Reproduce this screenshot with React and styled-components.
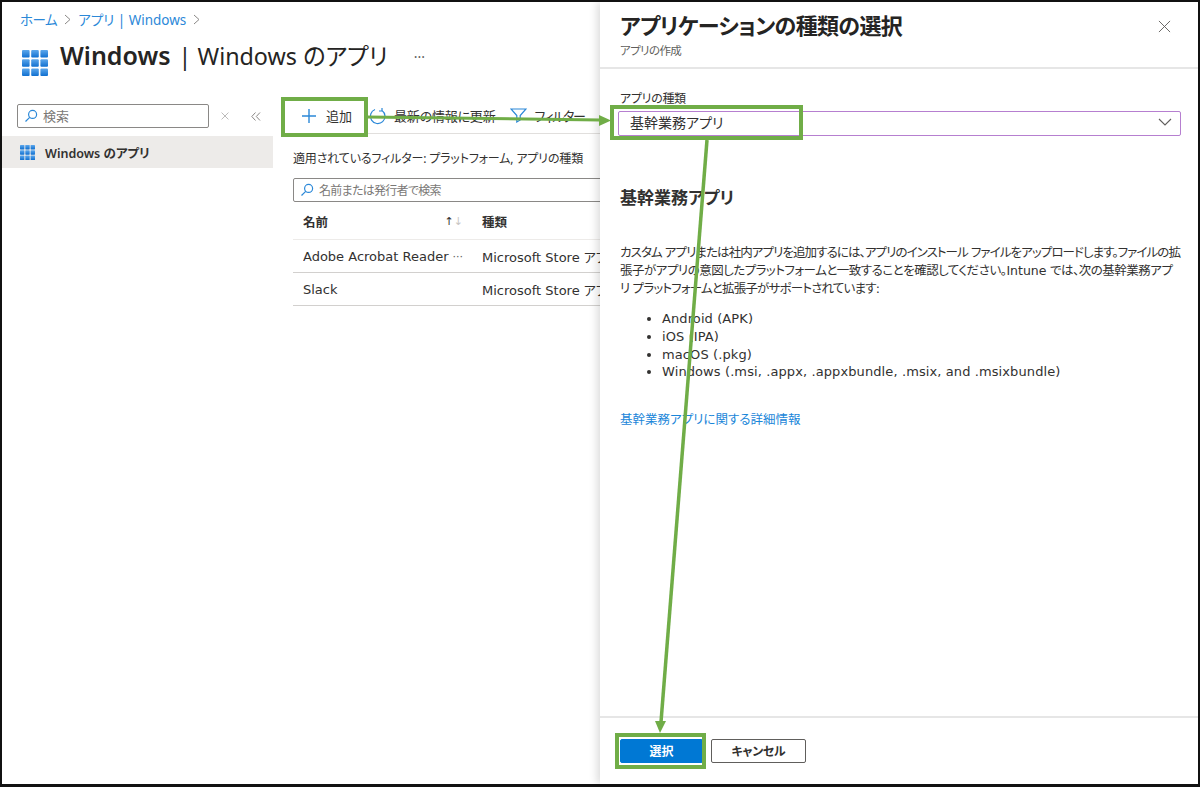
import React from "react";
import styled, { createGlobalStyle } from "styled-components";

const LATIN = `"DejaVu Sans", "Noto Sans CJK JP", sans-serif`;
const Global = createGlobalStyle`
  html, body { margin: 0; padding: 0; background: #fff; }
  * { box-sizing: border-box; }
  body { font-family: "Noto Sans", "Noto Sans CJK JP", sans-serif; font-feature-settings: "palt"; color: #323130; }
`;
const Frame = styled.div`
  position: relative; width: 1200px; height: 787px; border: 2px solid #111; border-bottom-width: 3px;
  display: flex; overflow: hidden; background: #fff;
`;
const Left = styled.div`width: 598px; flex: none; display: flex; flex-direction: column; overflow: hidden;`;
const Header = styled.header`padding: 7px 0 0 18px; height: 96px;`;
const Crumbs = styled.nav`display: flex; align-items: center; gap: 7px; font-size: 13.5px; height: 20px; color: #2b88d8; white-space: nowrap;`;
const Home = styled.span`letter-spacing: -.5px;`;
const ChevronMark = styled.svg`flex: none;`;
const TitleRow = styled.div`display: flex; align-items: flex-start; margin-top: 6px; white-space: nowrap;`;
const LogoWrap = styled.span`margin: 15px 12px 0 2px; display: flex;`;
const Title = styled.h1`margin: 0; font-size: 23.3px; font-weight: 400; line-height: 40px; color: #252423; b { font-weight: 600; font-size: 25px; margin-right: 2px; }`;
const More = styled.span`margin: -2px 0 0 26px; font-size: 14px; line-height: 40px; color: #605e5c;`;
const Body = styled.div`display: flex; flex: 1; min-height: 0;`;
const Side = styled.aside`width: 271px; flex: none;`;
const SideTop = styled.div`display: flex; align-items: center; padding-left: 15px; height: 36px;`;
const SearchBox = styled.div`
  display: flex; align-items: center; gap: 5px; height: 24px; width: ${p => p.$w}px;
  border: 1px solid #8a8886; border-radius: 2px; padding: 0 0 1px 6px; font-size: ${p => p.$fs}px; letter-spacing: ${p => p.$ls}px;
  color: #7a7876; white-space: nowrap; flex: none;
`;
const SideBtn = styled.span`display: flex; width: 31px; justify-content: center; color: #8a8886;`;
const NavItem = styled.div`
  display: flex; align-items: center; gap: 10px; height: 32px; margin-top: 2px; padding-left: 18px;
  background: #edebe9; font-size: 12.5px; font-weight: 600; color: #323130;
`;
const Main = styled.main`flex: 1; min-width: 0; padding-left: 20px; white-space: nowrap;`;
const Toolbar = styled.div`
  display: flex; align-items: center; height: 36px; margin-left: -10px; border-bottom: 1px solid #e1dfdd;
  font-size: 13px; color: #323130; padding-left: 18px;
`;
const ToolItem = styled.span`display: flex; align-items: center; gap: ${p => p.$gap}px; margin-right: ${p => p.$mr || 0}px; letter-spacing: ${p => p.$ls || 0}px;`;
const FilterInfo = styled.p`margin: 16px 0 10px; font-size: 12px; line-height: 18px; color: #323130; letter-spacing: -.15px;`;
const Table = styled.div`width: 320px;`;
const Row = styled.div`
  display: grid; grid-template-columns: 179px 1fr; height: ${p => p.$h}px; align-items: center; padding: ${p => p.$head ? 2 : 0}px 0 0 10px;
  border-bottom: 1px solid ${p => p.$head ? "#edebe9" : "#d2d0ce"}; font-family: ${LATIN}; font-size: ${p => p.$head ? 12.5 : 13}px; font-weight: ${p => p.$head ? 700 : 400}; overflow: hidden;
`;
const NameCell = styled.span`display: flex; justify-content: space-between; align-items: center; padding-right: 19px; overflow: hidden;`;
const Sort = styled.span`font-size: 11px; font-weight: 400; color: #323130; i { font-style: normal; color: #c8c6c4; }`;
const Ell = styled.span`color: #605e5c; font-size: 11px;`;

const Panel = styled.section`
  flex: 1; min-width: 0; display: flex; flex-direction: column; box-shadow: -3px 0 8px rgba(0,0,0,.14); position: relative; background: #fff;
`;
const PanelHead = styled.div`display: flex; justify-content: space-between; padding: 6px 27px 0 20px; height: 67px; border-bottom: 2px solid #e6e6e6;`;
const PanelTitle = styled.h2`margin: 0; font-size: 22px; font-weight: 600; line-height: 34px; color: #252423; letter-spacing: -.65px;`;
const PanelSub = styled.div`font-size: 11.5px; line-height: 17px; color: #605e5c; letter-spacing: -.6px;`;
const CloseBtn = styled.span`display: flex; margin-top: 12px; color: #605e5c;`;
const PanelBody = styled.div`flex: 1; padding: 20px 17px 0 18px; min-height: 0;`;
const FieldLabel = styled.label`display: block; font-size: 12px; line-height: 20px; margin-bottom: 2px; padding-left: 2px; color: #323130; letter-spacing: -.3px;`;
const Select = styled.div`
  display: flex; align-items: center; justify-content: space-between; height: 25px; border: 1px solid #b67fd0; border-radius: 2px;
  padding: 0 8px 3px 11px; font-size: 14px; color: #323130;
`;
const Section = styled.div`padding-left: 2px;`;
const H3 = styled.h3`margin: 49px 0 0; font-size: 17px; font-weight: 600; line-height: 26px; color: #323130;`;
const Para = styled.p`margin: 33px 0 0; font-family: ${LATIN}; font-size: 12.5px; line-height: 18px; white-space: nowrap; color: #323130; letter-spacing: -.92px;`;
const ParaLine = styled.span`letter-spacing: ${p => p.$ls}px;`;
const Latin = styled.span`letter-spacing: 0;`;
const List = styled.ul`margin: 12px 0 0; padding-left: 42px; font-family: ${LATIN}; font-size: 13px; letter-spacing: .1px; line-height: 17.800px; color: #323130; white-space: nowrap;`;
const Link = styled.a`display: block; margin-top: 30px; font-size: 12.5px; line-height: 18px; color: #1a86d9;`;
const Footer = styled.div`display: flex; gap: 8px; height: 68px; padding: 21px 0 0 20px; border-top: 2px solid #e6e6e6;`;
const Btn = styled.button`
  height: 24px; width: ${p => p.$w}px; font: 600 12px "Noto Sans", "Noto Sans CJK JP", sans-serif; font-feature-settings: "palt"; letter-spacing: ${p => p.$ls || 0}px; border-radius: 2px; padding: 0;
  border: 1px solid ${p => p.$primary ? "#0078d4" : "#605e5c"}; background: ${p => p.$primary ? "#0078d4" : "#fff"}; color: ${p => p.$primary ? "#fff" : "#323130"};
`;
const Callout = styled.div`
  position: absolute; left: ${p => p.$x - 2}px; top: ${p => p.$y - 2}px; width: ${p => p.$w}px; height: ${p => p.$h}px;
  border: 4px solid #70ad47; pointer-events: none;
`;
const Arrows = styled.svg`position: absolute; left: -2px; top: -2px; pointer-events: none;`;

const Grid = ({ size = 26 }) => (
  <svg width={size} height={size} viewBox="0 0 26 26">
    <defs><linearGradient id="g" x1="0" y1="0" x2="0" y2="1"><stop offset="0" stopColor="#5ea8ec" /><stop offset="1" stopColor="#0f6fd0" /></linearGradient></defs>
    {[0, 9.2, 18.4].flatMap(y => [0, 9.2, 18.4].map(x => <rect key={x + "-" + y} x={x} y={y} width="7.6" height="7.6" rx="1" fill="url(#g)" />))}
  </svg>
);
const Lens = () => (
  <svg width="14" height="14" viewBox="0 0 14 14" fill="none" stroke="#2b88d8" strokeWidth="1.2"><circle cx="8.6" cy="5.4" r="4" /><path d="M5.7 8.3 1.5 12.5" /></svg>
);
const Cross = ({ s = 14, c = "currentColor", w = 1 }) => (
  <svg width={s} height={s} viewBox="0 0 14 14" fill="none" stroke={c} strokeWidth={w}><path d="M1 1l12 12M13 1 1 13" /></svg>
);
const Chevron = () => (
  <ChevronMark width="7" height="11" viewBox="0 0 7 11" fill="none" stroke="#8a8886"><path d="M1 1l5 4.500-5 4.500" /></ChevronMark>
);

export default function App() {
  return (
    <Frame>
      <Global />
      <Left>
        <Header>
          <Crumbs><Home>ホーム</Home><Chevron /><span>アプリ | Windows</span><Chevron /></Crumbs>
          <TitleRow>
            <LogoWrap><Grid /></LogoWrap>
            <Title><b>Windows</b> | Windows のアプリ</Title>
            <More>...</More>
          </TitleRow>
        </Header>
        <Body>
          <Side>
            <SideTop>
              <SearchBox $w={192} $fs={13} $ls={0}><Lens />検索</SearchBox>
              <SideBtn><Cross s={8} c="#8a8886" /></SideBtn>
              <SideBtn>
                <svg width="10" height="9" viewBox="0 0 10 9" fill="none" stroke="#8a8886"><path d="M4.5.5.8 4.5l3.7 4M9 .5 5.3 4.5 9 8.500" /></svg>
              </SideBtn>
            </SideTop>
            <NavItem><Grid size={15} />Windows のアプリ</NavItem>
          </Side>
          <Main>
            <Toolbar>
              <ToolItem $gap={9} $mr={17}>
                <svg width="16" height="16" viewBox="0 0 16 16" stroke="#2b88d8" strokeWidth="1.4"><path d="M8 1v14M1 8h14" /></svg>追加
              </ToolItem>
              <ToolItem $gap={7} $mr={15} $ls={-.2}>
                <svg width="18" height="18" viewBox="0 0 18 18" fill="none" stroke="#2b88d8" strokeWidth="1.2"><path d="M13 3.400A7.300 7.300 0 1 1 6 2.500M13 1v3h-3" /></svg>最新の情報に更新
              </ToolItem>
              <ToolItem $gap={7} $ls={-1.4}>
                <svg width="17" height="15" viewBox="0 0 17 15" fill="none" stroke="#2b88d8" strokeWidth="1.2"><path d="M1 1h15l-5.800 6.500v4.500l-3.400 2V7.500z" /></svg>フィルター
              </ToolItem>
            </Toolbar>
            <FilterInfo>適用されているフィルター: プラットフォーム, アプリの種類</FilterInfo>
            <SearchBox $w={320} $fs={12} $ls={-.7}><Lens /><span>名前または発行者で検索</span></SearchBox>
            <Table>
              <Row $head $h={38}><NameCell>名前<Sort>↑<i>↓</i></Sort></NameCell><span>種類</span></Row>
              <Row $h={33}><NameCell>Adobe Acrobat Reader<Ell>···</Ell></NameCell><span>Microsoft Store アプリ</span></Row>
              <Row $h={33}><NameCell>Slack</NameCell><span>Microsoft Store アプリ</span></Row>
            </Table>
          </Main>
        </Body>
      </Left>
      <Panel>
        <PanelHead>
          <div>
            <PanelTitle>アプリケーションの種類の選択</PanelTitle>
            <PanelSub>アプリの作成</PanelSub>
          </div>
          <CloseBtn><Cross s={13} /></CloseBtn>
        </PanelHead>
        <PanelBody>
          <FieldLabel>アプリの種類</FieldLabel>
          <Select>基幹業務アプリ
            <svg width="14" height="8" viewBox="0 0 14 8" fill="none" stroke="#605e5c" strokeWidth="1.1"><path d="M1 1l6 6 6-6" /></svg>
          </Select>
          <Section>
            <H3>基幹業務アプリ</H3>
            <Para>
              カスタム アプリまたは社内アプリを追加するには、アプリのインストール ファイルをアップロードします。ファイルの拡<br />
              <ParaLine $ls={-.5}>張子がアプリの意図したプラットフォームと一致することを確認してください。<Latin>Intune</Latin> では、次の基幹業務アプ</ParaLine><br />
              <ParaLine $ls={-.8}>リ プラットフォームと拡張子がサポートされています:</ParaLine>
            </Para>
            <List>
              <li>Android (APK)</li>
              <li>iOS (IPA)</li>
              <li>macOS (.pkg)</li>
              <li>Windows (.msi, .appx, .appxbundle, .msix, and .msixbundle)</li>
            </List>
            <Link>基幹業務アプリに関する詳細情報</Link>
          </Section>
        </PanelBody>
        <Footer>
          <Btn $primary $w={83}>選択</Btn>
          <Btn $w={95} $ls={-.3}>キャンセル</Btn>
        </Footer>
      </Panel>
      <Arrows width="1200" height="787" viewBox="0 0 1200 787">
        <path d="M367 117 600 120" stroke="#70ad47" strokeWidth="3" fill="none" />
        <path d="M611 120.500 599 115v11z" fill="#70ad47" />
        <path d="M707 140 661 722" stroke="#70ad47" strokeWidth="3.500" fill="none" />
        <path d="M660 733 655 721h11z" fill="#70ad47" />
      </Arrows>
      <Callout $x={281} $y={97} $w={87} $h={40} />
      <Callout $x={610} $y={105} $w={193} $h={35} />
      <Callout $x={615} $y={733} $w={91} $h={36} />
    </Frame>
  );
}
